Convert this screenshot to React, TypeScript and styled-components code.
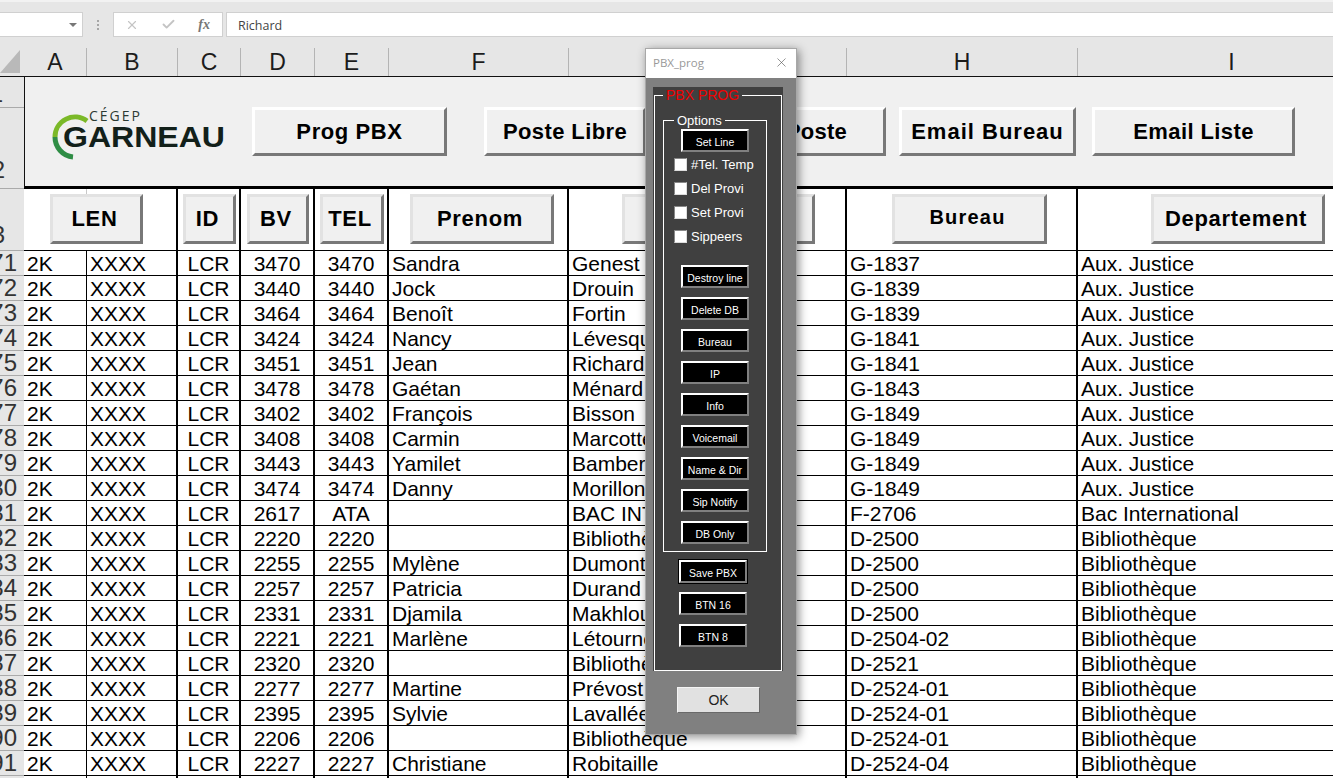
import styled, { createGlobalStyle } from "styled-components";
import { X, Check } from "lucide-react";

const GlobalStyle = createGlobalStyle`
    html, body {
        margin: 0;
        padding: 0;
        width: 1333px;
        height: 778px;
        overflow: hidden;
        background: #e6e6e6;
    }
    * {
        box-sizing: border-box;
    }
`;

const columns = [
    { name: "A", width: 63 },
    { name: "B", width: 91 },
    { name: "C", width: 63 },
    { name: "D", width: 74 },
    { name: "E", width: 74 },
    { name: "F", width: 180 },
    { name: "G", width: 278 },
    { name: "H", width: 231 },
    { name: "I", width: 308 },
];

const headerCells = [
    { label: "LEN", width: 154, pad: 26, btn: 93 },
    { label: "ID", width: 63, pad: 5, btn: 53 },
    { label: "BV", width: 74, pad: 6, btn: 62 },
    { label: "TEL", width: 74, pad: 5, btn: 64 },
    { label: "Prenom", width: 180, pad: 21, btn: 144 },
    { label: "Nom", width: 278, pad: 53, btn: 193 },
    { label: "Bureau", width: 231, pad: 45, btn: 155 },
    { label: "Departement", width: 308, pad: 73, btn: 174 },
];

// num, poste, tel, prenom, nom, bureau, departement
const rows: [number, string, string, string, string, string, string][] = [
    [71, "3470", "3470", "Sandra", "Genest", "G-1837", "Aux. Justice"],
    [72, "3440", "3440", "Jock", "Drouin", "G-1839", "Aux. Justice"],
    [73, "3464", "3464", "Benoît", "Fortin", "G-1839", "Aux. Justice"],
    [74, "3424", "3424", "Nancy", "Lévesque", "G-1841", "Aux. Justice"],
    [75, "3451", "3451", "Jean", "Richard", "G-1841", "Aux. Justice"],
    [76, "3478", "3478", "Gaétan", "Ménard", "G-1843", "Aux. Justice"],
    [77, "3402", "3402", "François", "Bisson", "G-1849", "Aux. Justice"],
    [78, "3408", "3408", "Carmin", "Marcotte", "G-1849", "Aux. Justice"],
    [79, "3443", "3443", "Yamilet", "Bamberger", "G-1849", "Aux. Justice"],
    [80, "3474", "3474", "Danny", "Morillon", "G-1849", "Aux. Justice"],
    [81, "2617", "ATA", "", "BAC INTERNATIONAL", "F-2706", "Bac International"],
    [82, "2220", "2220", "", "Bibliothèque", "D-2500", "Bibliothèque"],
    [83, "2255", "2255", "Mylène", "Dumont", "D-2500", "Bibliothèque"],
    [84, "2257", "2257", "Patricia", "Durand", "D-2500", "Bibliothèque"],
    [85, "2331", "2331", "Djamila", "Makhlouf", "D-2500", "Bibliothèque"],
    [86, "2221", "2221", "Marlène", "Létourneau", "D-2504-02", "Bibliothèque"],
    [87, "2320", "2320", "", "Bibliothèque", "D-2521", "Bibliothèque"],
    [88, "2277", "2277", "Martine", "Prévost", "D-2524-01", "Bibliothèque"],
    [89, "2395", "2395", "Sylvie", "Lavallée", "D-2524-01", "Bibliothèque"],
    [90, "2206", "2206", "", "Bibliothèque", "D-2524-01", "Bibliothèque"],
    [91, "2227", "2227", "Christiane", "Robitaille", "D-2524-04", "Bibliothèque"],
];

const optionButtons = ["Destroy line", "Delete DB", "Bureau", "IP", "Info", "Voicemail", "Name & Dir", "Sip Notify", "DB Only"];
const checks = ["#Tel. Temp", "Del Provi", "Set Provi", "Sippeers"];

const Wrapper = styled.main`
    position: relative;
    width: 1333px;
    height: 778px;
    overflow: hidden;
    background: #e6e6e6;
    font-family: "Liberation Sans", Arial, sans-serif;
`;

/* formula bar */
const FormulaBar = styled.div`
    display: flex;
    align-items: flex-end;
    height: 38px;
    padding-bottom: 1px;
    border-top: 2px solid #f2f2f2;
    background: #e6e6e6;
`;

const NameBox = styled.div`
    display: flex;
    align-items: center;
    justify-content: flex-end;
    width: 83px;
    height: 25px;
    padding-right: 5px;
    background: #fff;
    border: 1px solid #d0d0d0;
    border-left: none;
    &::after {
        content: "";
        border-left: 4px solid transparent;
        border-right: 4px solid transparent;
        border-top: 4px solid #777;
    }
`;

const Dots = styled.div`
    width: 30px;
    height: 25px;
    display: flex;
    flex-direction: column;
    align-items: center;
    justify-content: center;
    gap: 2px;
    > i {
        display: block;
        width: 2px;
        height: 2px;
        background: #a6a6a6;
    }
`;

const FxBox = styled.div`
    display: flex;
    align-items: center;
    justify-content: space-between;
    width: 110px;
    height: 25px;
    padding: 0 12px 0 11px;
    background: #fff;
    border: 1px solid #d0d0d0;
    color: #c4c4c4;
    em {
        font-family: "Liberation Serif", serif;
        font-size: 14px;
        font-weight: 700;
        color: #777;
    }
`;

const FormulaInput = styled.div`
    flex: 1;
    height: 25px;
    margin-left: 3px;
    padding-left: 11px;
    background: #fff;
    border: 1px solid #d0d0d0;
    border-right: none;
    font-family: "Open Sans", sans-serif;
    font-size: 12.5px;
    line-height: 25px;
    color: #444;
`;

/* column letters */
const ColumnBar = styled.div`
    display: flex;
    height: 39px;
    width: 1400px;
    padding-top: 10px;
    border-bottom: 1px solid #111;
`;

const Corner = styled.div`
    flex: 0 0 24px;
    height: 100%;
    &::before {
        content: "";
        display: block;
        margin: 2px 0 0 0;
        width: 0;
        height: 0;
        border-left: 20px solid transparent;
        border-bottom: 23px solid #b9b9b9;
    }
`;

const ColumnName = styled.div<{ $width: number }>`
    flex: 0 0 ${(props) => props.$width}px;
    text-align: center;
    font-size: 23px;
    line-height: 29px;
    color: #1c1c1c;
    border-right: 1px solid #b4b4b4;
`;

/* sheet rows */
const Row = styled.div`
    display: flex;
    width: 1400px;
`;

const RowHead = styled.div<{ $height: number; $end?: number; $align?: string; $inset?: string }>`
    display: flex;
    flex: none;
    width: 24px;
    height: ${(props) => props.$height}px;
    justify-content: flex-end;
    align-items: ${(props) => props.$align || "center"};
    padding: ${(props) => props.$inset || "0"};
    padding-right: ${(props) => props.$end ?? 7}px;
    overflow: hidden;
    font-size: 24px;
    line-height: 24px;
    color: #333;
    background: #e6e6e6;
    border-bottom: 1px solid #aaa;
`;

const RowHeadStack = styled.div`
    display: flex;
    flex-direction: column;
    flex: none;
    width: 24px;
`;

const Banner = styled.section`
    display: flex;
    align-items: center;
    flex: 1;
    height: 112px;
    padding-left: 28px;
    background: #f0f0f0;
    border-left: 1px solid #111;
    border-bottom: 3px solid #000;
`;

const Logo = styled.svg`
    flex: 0 0 175px;
    width: 175px;
    height: 50px;
    margin-right: 24px;
    overflow: visible;
`;

const XlButton = styled.button<{ $width: number; $left?: number; $height?: number; $onWhite?: boolean; $small?: boolean; $spacing?: number }>`
    flex: 0 0 ${(props) => props.$width}px;
    width: ${(props) => props.$width}px;
    height: ${(props) => props.$height || 49}px;
    margin-left: ${(props) => props.$left || 0}px;
    padding: 0 ${(props) => (props.$onWhite ? 4 : 0)}px ${(props) => (props.$small ? 4 : 0)}px 0;
    background: #f0f0f0;
    border-style: solid;
    border-width: 3px;
    border-color: ${(props) => (props.$onWhite ? "#e2e2e2" : "#fff")} #787878 #787878 ${(props) => (props.$onWhite ? "#e2e2e2" : "#fff")};
    font-family: "Liberation Sans", Arial, sans-serif;
    font-size: ${(props) => (props.$small ? 20 : 22)}px;
    font-weight: 700;
    letter-spacing: ${(props) => props.$spacing ?? (props.$small ? 1.2 : 0.7)}px;
    white-space: nowrap;
    color: #000;
`;

const HeaderCell = styled.div<{ $width: number; $pad: number; $tick?: boolean }>`
    position: relative;
    display: flex;
    align-items: flex-start;
    flex: 0 0 ${(props) => props.$width}px;
    height: 62px;
    padding: 5px 0 0 ${(props) => props.$pad}px;
    background: #fff;
    border-right: 2px solid #000;
    border-bottom: 1px solid #000;
    overflow: hidden;
    &::after {
        content: "";
        display: ${(props) => (props.$tick ? "block" : "none")};
        position: absolute;
        left: 62px;
        top: 0;
        width: 1px;
        height: 5px;
        background: #c8c8c8;
    }
`;

const Cell = styled.div<{ $width: number; $center?: boolean; $thin?: boolean }>`
    flex: 0 0 ${(props) => props.$width}px;
    height: 25px;
    padding-left: ${(props) => (props.$center ? 0 : 3)}px;
    background: #fff;
    border-right: ${(props) => (props.$thin ? 1 : 2)}px solid #000;
    border-bottom: 1px solid #000;
    text-align: ${(props) => (props.$center ? "center" : "left")};
    font-size: 21px;
    line-height: 26px;
    white-space: nowrap;
    overflow: hidden;
    color: #000;
`;

/* floating dialog */
const Dialog = styled.aside`
    position: absolute;
    left: 645px;
    top: 48px;
    width: 152px;
    height: 687px;
    display: flex;
    flex-direction: column;
    border: 1px solid #a8a8a8;
    background: #808080;
    box-shadow: 2px 2px 9px rgba(0, 0, 0, 0.45);
`;

const TitleBar = styled.header`
    display: flex;
    align-items: center;
    justify-content: space-between;
    flex: 0 0 29px;
    padding: 0 7px 2px 7px;
    background: #fff;
    font-family: "Open Sans", sans-serif;
    font-size: 11.5px;
    color: #999;
`;

const DialogBody = styled.div`
    display: flex;
    flex-direction: column;
    align-items: center;
    flex: 1;
    padding: 9px 13px 0 7px;
`;

const Panel = styled.div`
    width: 130px;
    height: 584px;
    padding: 0 1px;
    background: #404040;
`;

const Frame = styled.fieldset<{ $inner?: boolean }>`
    display: flex;
    flex-direction: column;
    align-items: ${(props) => (props.$inner ? "center" : "flex-start")};
    height: ${(props) => (props.$inner ? 439 : 584)}px;
    width: ${(props) => (props.$inner ? 104 : 128)}px;
    min-width: 0;
    margin: ${(props) => (props.$inner ? 10 : 0)}px 0 0 ${(props) => (props.$inner ? 8 : 0)}px;
    padding: ${(props) => (props.$inner ? "1px 0 0" : "0")};
    border: 1px solid #fff;
`;

const FrameTitle = styled.legend<{ $red?: boolean }>`
    margin-left: ${(props) => (props.$red ? 8 : 10)}px;
    padding: 0 3px;
    font-size: ${(props) => (props.$red ? 14 : 13)}px;
    line-height: ${(props) => (props.$red ? 16 : 15)}px;
    color: ${(props) => (props.$red ? "#f00000" : "#fff")};
`;

const MacroButton = styled.button<{ $gapTop?: number; $left?: number; $outlined?: boolean }>`
    flex: 0 0 23px;
    width: 68px;
    height: 23px;
    margin: ${(props) => props.$gapTop ?? 9}px 0 0 ${(props) => props.$left || 0}px;
    padding: 2px 0 0;
    background: #000;
    border-style: solid;
    border-width: 2px;
    border-color: #fff #808080 #808080 #fff;
    outline: ${(props) => (props.$outlined ? "1px solid #000" : "none")};
    font-family: "Liberation Sans", Arial, sans-serif;
    font-size: 10.5px;
    white-space: nowrap;
    color: #fff;
`;

const CheckList = styled.div`
    display: flex;
    flex-direction: column;
    align-self: flex-start;
    margin-bottom: 8px;
    padding-left: 10px;
`;

const CheckRow = styled.label`
    display: flex;
    align-items: center;
    gap: 4px;
    height: 24px;
    font-size: 13px;
    white-space: nowrap;
    color: #fff;
`;

const CheckBox = styled.span`
    flex: 0 0 13px;
    width: 13px;
    height: 13px;
    background: #fff;
    border-style: solid;
    border-width: 1px;
    border-color: #888 #ddd #ddd #888;
`;

const OkButton = styled.button`
    flex: 0 0 26px;
    width: 83px;
    margin: 16px 0 0 1px;
    padding: 0;
    background: #e1e1e1;
    border-style: solid;
    border-width: 1px;
    border-color: #f4f4f4 #696969 #696969 #f4f4f4;
    font-family: "Liberation Sans", Arial, sans-serif;
    font-size: 14px;
    color: #222;
`;

export default function App() {
    return (
        <Wrapper>
            <GlobalStyle />

            <FormulaBar>
                <NameBox />
                <Dots><i /><i /><i /></Dots>
                <FxBox>
                    <X size={14} strokeWidth={2} />
                    <Check size={15} strokeWidth={3} />
                    <em><i>fx</i></em>
                </FxBox>
                <FormulaInput>Richard</FormulaInput>
            </FormulaBar>

            <ColumnBar>
                <Corner />
                {columns.map((col) => (
                    <ColumnName key={col.name} $width={col.width}>{col.name}</ColumnName>
                ))}
            </ColumnBar>

            <Row>
                <RowHeadStack>
                    <RowHead $height={31} $end={21} $align="flex-start" $inset="5px 0 0">1</RowHead>
                    <RowHead $height={81} $end={19} $align="flex-end" $inset="0 0 6px">2</RowHead>
                </RowHeadStack>
                <Banner>
                    <Logo viewBox="0 0 175 50">
                        <path d="M34 14 A20 20 0 0 0 2 30" fill="none" stroke="#7bb928" strokeWidth="5" />
                        <path d="M2 30 A20 20 0 0 0 20 50" fill="none" stroke="#2f8d45" strokeWidth="5" />
                        <text x="36" y="14" fontFamily="Open Sans, sans-serif" fontSize="14" textLength={51} fill="#2c3a33">CÉGEP</text>
                        <text x="10" y="40" fontFamily="Liberation Sans, sans-serif" fontWeight="700" fontSize="30" textLength={162} lengthAdjust="spacingAndGlyphs" fill="#12201a">GARNEAU</text>
                    </Logo>
                    <XlButton $width={195} $spacing={0.6}>Prog PBX</XlButton>
                    <XlButton $width={162} $left={37} $spacing={0.4}>Poste Libre</XlButton>
                    <XlButton $width={199} $left={41} $spacing={0.2}>Infos Poste</XlButton>
                    <XlButton $width={177} $left={13} $spacing={1}>Email Bureau</XlButton>
                    <XlButton $width={203} $left={16} $spacing={0.4}>Email Liste</XlButton>
                </Banner>
            </Row>

            <Row>
                <RowHead $height={62} $end={19} $align="flex-end" $inset="0 0 3px">3</RowHead>
                {headerCells.map((cell) => (
                    <HeaderCell key={cell.label} $width={cell.width} $pad={cell.pad} $tick={cell.label === "LEN"}>
                        <XlButton $width={cell.btn} $height={50} $onWhite $small={cell.label === "Bureau"}>{cell.label}</XlButton>
                    </HeaderCell>
                ))}
            </Row>

            {rows.map(([num, poste, tel, prenom, nom, bureau, dept]) => (
                <Row key={num}>
                    <RowHead $height={25}>{num}</RowHead>
                    <Cell $width={63} $thin>2K</Cell>
                    <Cell $width={91}>XXXX</Cell>
                    <Cell $width={63} $center>LCR</Cell>
                    <Cell $width={74} $center>{poste}</Cell>
                    <Cell $width={74} $center>{tel}</Cell>
                    <Cell $width={180}>{prenom}</Cell>
                    <Cell $width={278}>{nom}</Cell>
                    <Cell $width={231}>{bureau}</Cell>
                    <Cell $width={308}>{dept}</Cell>
                </Row>
            ))}

            <Row>
                <RowHead $height={25} />
                {columns.map((col) => (
                    <Cell key={col.name} $width={col.width} $thin={col.name === "A"} />
                ))}
            </Row>

            <Dialog>
                <TitleBar>
                    PBX_prog
                    <X size={15} strokeWidth={1} color="#555" />
                </TitleBar>
                <DialogBody>
                    <Panel>
                        <Frame>
                            <FrameTitle $red>PBX PROG</FrameTitle>
                            <Frame $inner>
                                <FrameTitle>Options</FrameTitle>
                                <MacroButton $gapTop={0}>Set Line</MacroButton>
                                <CheckList>
                                    {checks.map((label) => (
                                        <CheckRow key={label}>
                                            <CheckBox />
                                            {label}
                                        </CheckRow>
                                    ))}
                                </CheckList>
                                {optionButtons.map((label) => (
                                    <MacroButton key={label}>{label}</MacroButton>
                                ))}
                            </Frame>
                            <MacroButton $gapTop={8} $left={24} $outlined>Save PBX</MacroButton>
                            <MacroButton $gapTop={9} $left={24}>BTN 16</MacroButton>
                            <MacroButton $gapTop={9} $left={24}>BTN 8</MacroButton>
                        </Frame>
                    </Panel>
                    <OkButton>OK</OkButton>
                </DialogBody>
            </Dialog>
        </Wrapper>
    );
}
